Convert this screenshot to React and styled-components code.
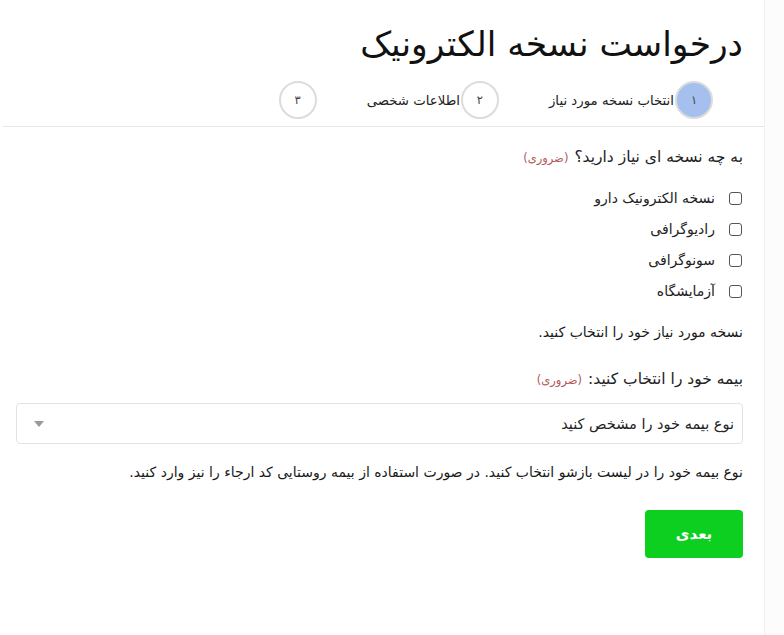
import styled, { createGlobalStyle } from "styled-components";

const Global = createGlobalStyle`
  html, body {
    margin: 0;
    padding: 0;
    background: #fcfcfc;
  }
  body {
    font-family: "DejaVu Sans", "Noto Sans", sans-serif;
    color: #222;
  }
`;

const Page = styled.div`
  direction: rtl;
  width: 765px;
  min-height: 635px;
  background: #fff;
  border-right: 1px solid #f1f1f1;
  box-sizing: border-box;
`;

const Header = styled.header`
  padding: 24px 21px 0 0;
  border-bottom: 1px solid #e6e6e6;
  margin-left: 3px;
`;

const Title = styled.h1`
  margin: 0;
  font-size: 34.5px;
  font-weight: 400;
  line-height: 40px;
  color: #111;
`;

const Steps = styled.ol`
  list-style: none;
  display: flex;
  gap: 50px;
  margin: 17px 30px 7px 0;
  padding: 0;
`;

const Step = styled.li`
  display: flex;
  align-items: center;
  font-size: 13.3px;
  color: #222;
`;

const Circle = styled.span`
  width: 38px;
  height: 38px;
  box-sizing: border-box;
  border-radius: 50%;
  border: 2px solid #dcdcdc;
  background: ${(p) => (p.$active ? "#a5c0ee" : "#fff")};
  display: flex;
  align-items: center;
  justify-content: center;
  font-size: 11.5px;
  color: #444;
  margin-left: 1px;
`;

const Body = styled.main`
  padding: 18px 21px 40px 16px;
`;

const Label = styled.div`
  margin-top: ${(p) => p.$mt || "0"};
  font-size: 15.5px;
  line-height: 24px;
  color: #222;
`;

const Required = styled.span`
  font-size: 11.5px;
  color: #b4575a;
  margin-right: 6px;
`;

const Options = styled.div`
  display: flex;
  flex-direction: column;
  gap: 7px;
  margin: 16px 0 0;
`;

const Option = styled.label`
  display: flex;
  align-items: center;
  gap: 14px;
  font-size: 14px;
  line-height: 24px;
`;

const Box = styled.span`
  width: 11px;
  height: 11px;
  border: 1px solid #555;
  border-radius: 3px;
  margin-right: 1px;
`;

const Help = styled.p`
  margin: ${(p) => p.$m || "0"};
  font-size: 14px;
  line-height: 20px;
  color: #1a1a1a;
`;

const Select = styled.div`
  margin-top: 11px;
  height: 41px;
  box-sizing: border-box;
  border: 1px solid #e3e3e3;
  border-radius: 4px;
  display: flex;
  align-items: center;
  justify-content: space-between;
  padding: 0 8px 0 17px;
  font-size: 14.5px;
  color: #222;
`;

const Caret = styled.span`
  width: 0;
  height: 0;
  border-left: 5px solid transparent;
  border-right: 5px solid transparent;
  border-top: 6px solid #9a9a9a;
`;

const Next = styled.button`
  display: block;
  margin-top: 28px;
  width: 98px;
  height: 48px;
  border: none;
  border-radius: 4px;
  background: #0ccf1f;
  color: #fff;
  font-family: inherit;
  font-size: 15px;
  font-weight: 700;
`;

const items = ["نسخه الکترونیک دارو", "رادیوگرافی", "سونوگرافی", "آزمایشگاه"];

export default function App() {
  return (
    <>
      <Global />
      <Page>
        <Header>
          <Title>درخواست نسخه الکترونیک</Title>
          <Steps>
            <Step>
              <Circle $active>۱</Circle>
              انتخاب نسخه مورد نیاز
            </Step>
            <Step>
              <Circle>۲</Circle>
              اطلاعات شخصی
            </Step>
            <Step>
              <Circle>۳</Circle>
            </Step>
          </Steps>
        </Header>
        <Body>
          <Label>
            به چه نسخه ای نیاز دارید؟<Required>(ضروری)</Required>
          </Label>
          <Options>
            {items.map((t) => (
              <Option key={t}>
                <Box />
                {t}
              </Option>
            ))}
          </Options>
          <Help $m="19px 0 0">نسخه مورد نیاز خود را انتخاب کنید.</Help>
          <Label $mt="25px">
            بیمه خود را انتخاب کنید:<Required>(ضروری)</Required>
          </Label>
          <Select>
            <span>نوع بیمه خود را مشخص کنید</span>
            <Caret />
          </Select>
          <Help $m="18px 0 0">
            نوع بیمه خود را در لیست بازشو انتخاب کنید. در صورت استفاده از بیمه روستایی کد ارجاء را نیز وارد کنید.
          </Help>
          <Next>بعدی</Next>
        </Body>
      </Page>
    </>
  );
}
